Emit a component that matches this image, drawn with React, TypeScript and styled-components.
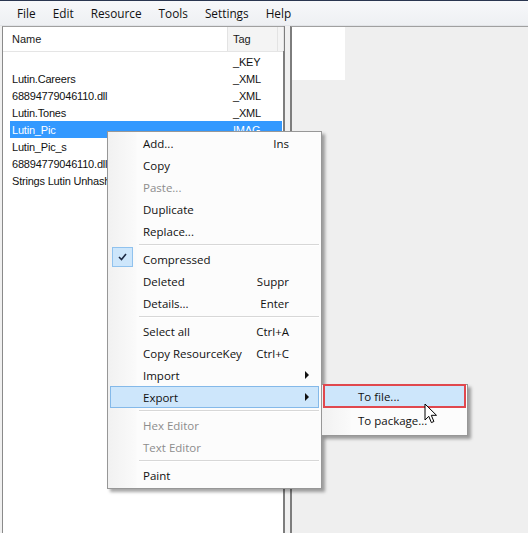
import React from "react";
import styled, { createGlobalStyle } from "styled-components";

const Global = createGlobalStyle`
  html, body { margin: 0; padding: 0; background: #f0f0f0; }
  body { width: 528px; height: 533px; overflow: hidden; }
  * { box-sizing: border-box; }
`;

const Window = styled.div`
  position: relative;
  width: 528px;
  height: 533px;
  display: flex;
  flex-direction: column;
  border-top: 1px solid #2a3650;
  background: #f0f0f0;
  font-family: "Liberation Sans", Arial, sans-serif;
`;

const MenuBar = styled.div`
  height: 25px;
  display: flex;
  align-items: center;
  padding-left: 9px;
  background: linear-gradient(#f7f8fa, #eef0f3);
  border-bottom: 1px solid #e2e4e8;
  font-family: "Open Sans", "Noto Sans", sans-serif;
  font-size: 11.8px;
  color: #111;
  white-space: nowrap;
`;

const MenuItem = styled.span`
  padding: 0 8px;
  margin-right: 1px;
`;

const Body = styled.div`
  flex: 1;
  display: flex;
  min-height: 0;
`;

const LeftPane = styled.div`
  width: 283px;
  margin-left: 2px;
  border-left: 1px solid #8a8a8a;
  border-top: 1px solid #a0a0a0;
  border-right: 2px solid #7d7d7d;
  background: #fff;
  display: flex;
  flex-direction: column;
`;

const Header = styled.div`
  height: 25px;
  display: grid;
  grid-template-columns: 225px 50px 1fr;
  border-bottom: 1px solid #e5e5e5;
  font-size: 11px;
  color: #1a1a1a;
`;

const HeadCell = styled.div<{ $shade?: boolean }>`
  display: flex;
  align-items: center;
  padding-left: ${(p) => (p.$shade ? "5px" : "9px")};
  background: ${(p) => (p.$shade ? "#f4f4f4" : "#fff")};
  border-right: 1px solid #e3e3e3;
`;

const List = styled.div`
  padding-top: 1px;
  padding-left: 7px;
  display: flex;
  flex-direction: column;
`;

const Row = styled.div<{ $sel?: boolean }>`
  height: 17px;
  display: grid;
  grid-template-columns: 221px 1fr;
  align-items: center;
  font-size: 11px;
  letter-spacing: -0.2px;
  white-space: nowrap;
  color: ${(p) => (p.$sel ? "#fff" : "#111")};
  background: ${(p) => (p.$sel ? "#3399ff" : "transparent")};
  padding-left: 2px;
  margin-right: 1px;
`;

const Splitter = styled.div`
  width: 5px;
  background: #f0f0f0;
`;

const RightPane = styled.div`
  flex: 1;
  border-left: 2px solid #7d7d7d;
  border-top: 1px solid #a0a0a0;
  background: #efefef;
`;

const WhiteBox = styled.div`
  width: 53px;
  height: 53px;
  background: #fff;
`;

const Menu = styled.div<{ $left: number; $top: number; $width: number; $gap?: number }>`
  position: absolute;
  left: ${(p) => p.$left}px;
  top: ${(p) => p.$top}px;
  width: ${(p) => p.$width}px;
  padding: 0 2px ${(p) => 2 + (p.$gap || 0)}px;
  gap: ${(p) => p.$gap || 0}px;
  background: linear-gradient(90deg, #f1f1f1 0px, #fafafa 28px, #fcfcfc 29px);
  border: 1px solid #979797;
  box-shadow: 3px 3px 3px rgba(0, 0, 0, 0.35);
  font-family: "Open Sans", "Noto Sans", sans-serif;
  font-size: 11.5px;
  color: #111;
  display: flex;
  flex-direction: column;
  white-space: nowrap;
`;

const Item = styled.div<{ $hot?: boolean; $dim?: boolean; $indent: number }>`
  position: relative;
  height: 22px;
  display: flex;
  align-items: center;
  padding-left: ${(p) => p.$indent}px;
  padding-right: 12px;
  color: ${(p) => (p.$dim ? "#8d8d8d" : "#111")};
  background: ${(p) => (p.$hot ? "#cde6fb" : "transparent")};
  border: 1px solid ${(p) => (p.$hot ? "#84b9e9" : "transparent")};
`;

const Label = styled.span`
  flex: 1;
`;

const Shortcut = styled.span`
  margin-right: 17px;
  text-align: right;
`;

const Arrow = styled.span`
  width: 0;
  height: 0;
  border-top: 4px solid transparent;
  border-bottom: 4px solid transparent;
  border-left: 4px solid #111;
  margin-right: -3px;
`;

const Sep = styled.div`
  height: 6px;
  display: flex;
  align-items: center;
  padding-left: 29px;
  &::after {
    content: "";
    flex: 1;
    height: 1px;
    background: #d7d7d7;
    border-bottom: 1px solid #fff;
  }
`;

const CheckBox = styled.span`
  position: absolute;
  left: 1px;
  top: -2px;
  width: 21px;
  height: 20px;
  background: #cde6fb;
  border: 1px solid #90c2ee;
  display: flex;
  align-items: center;
  justify-content: center;
`;

const Annot = styled.div`
  position: absolute;
  inset: -2px -2px -2px -2px;
  border: 2px solid #e0484e;
  pointer-events: none;
`;

const Cursor = styled.svg`
  position: absolute;
  left: 424px;
  top: 402px;
`;

type MI =
  | { sep: true }
  | { label: string; key?: string; dim?: boolean; sub?: boolean; hot?: boolean; check?: boolean };

const items: MI[] = [
  { label: "Add...", key: "Ins" },
  { label: "Copy" },
  { label: "Paste...", dim: true },
  { label: "Duplicate" },
  { label: "Replace..." },
  { sep: true },
  { label: "Compressed", check: true },
  { label: "Deleted", key: "Suppr" },
  { label: "Details...", key: "Enter" },
  { sep: true },
  { label: "Select all", key: "Ctrl+A" },
  { label: "Copy ResourceKey", key: "Ctrl+C" },
  { label: "Import", sub: true },
  { label: "Export", sub: true, hot: true },
  { sep: true },
  { label: "Hex Editor", dim: true },
  { label: "Text Editor", dim: true },
  { sep: true },
  { label: "Paint" },
];

const rows: { name: string; tag: string; sel?: boolean }[] = [
  { name: "", tag: "_KEY" },
  { name: "Lutin.Careers", tag: "_XML" },
  { name: "68894779046110.dll", tag: "_XML" },
  { name: "Lutin.Tones", tag: "_XML" },
  { name: "Lutin_Pic", tag: "IMAG", sel: true },
  { name: "Lutin_Pic_s", tag: "" },
  { name: "68894779046110.dll", tag: "" },
  { name: "Strings Lutin Unhashed", tag: "" },
];

export default function App() {
  return (
    <Window>
      <Global />
      <MenuBar>
        {["File", "Edit", "Resource", "Tools", "Settings", "Help"].map((m) => (
          <MenuItem key={m}>{m}</MenuItem>
        ))}
      </MenuBar>
      <Body>
        <LeftPane>
          <Header>
            <HeadCell>Name</HeadCell>
            <HeadCell $shade>Tag</HeadCell>
            <HeadCell $shade />
          </Header>
          <List>
            {rows.map((r, i) => (
              <Row key={i} $sel={r.sel}>
                <span>{r.name}</span>
                <span>{r.tag}</span>
              </Row>
            ))}
          </List>
        </LeftPane>
        <Splitter />
        <RightPane>
          <WhiteBox />
        </RightPane>
      </Body>

      <Menu $left={107} $top={130} $width={215}>
        {items.map((it, i) =>
          "sep" in it ? (
            <Sep key={i} />
          ) : (
            <Item key={i} $hot={it.hot} $dim={it.dim} $indent={32}>
              {it.check && (
                <CheckBox>
                  <svg width="9" height="8" viewBox="0 0 9 8">
                    <path d="M1 4 L3.5 6.5 L8 1" fill="none" stroke="#1d2a44" strokeWidth="1.6" />
                  </svg>
                </CheckBox>
              )}
              <Label>{it.label}</Label>
              {it.key && <Shortcut>{it.key}</Shortcut>}
              {it.sub && <Arrow />}
            </Item>
          )
        )}
      </Menu>

      <Menu $left={321} $top={383} $width={147} $gap={2}>
        <Item $hot $indent={33}>
          <Label>To file...</Label>
          <Annot />
        </Item>
        <Item $indent={33}>
          <Label>To package...</Label>
        </Item>
      </Menu>

      <Cursor width="14" height="22" viewBox="0 0 14 22">
        <path
          d="M1 1 L1 17 L4.8 13.3 L7.4 19.6 L9.9 18.5 L7.3 12.3 L12.5 12.3 Z"
          fill="#fff"
          stroke="#000"
          strokeWidth="1"
          strokeLinejoin="round"
        />
      </Cursor>
    </Window>
  );
}
